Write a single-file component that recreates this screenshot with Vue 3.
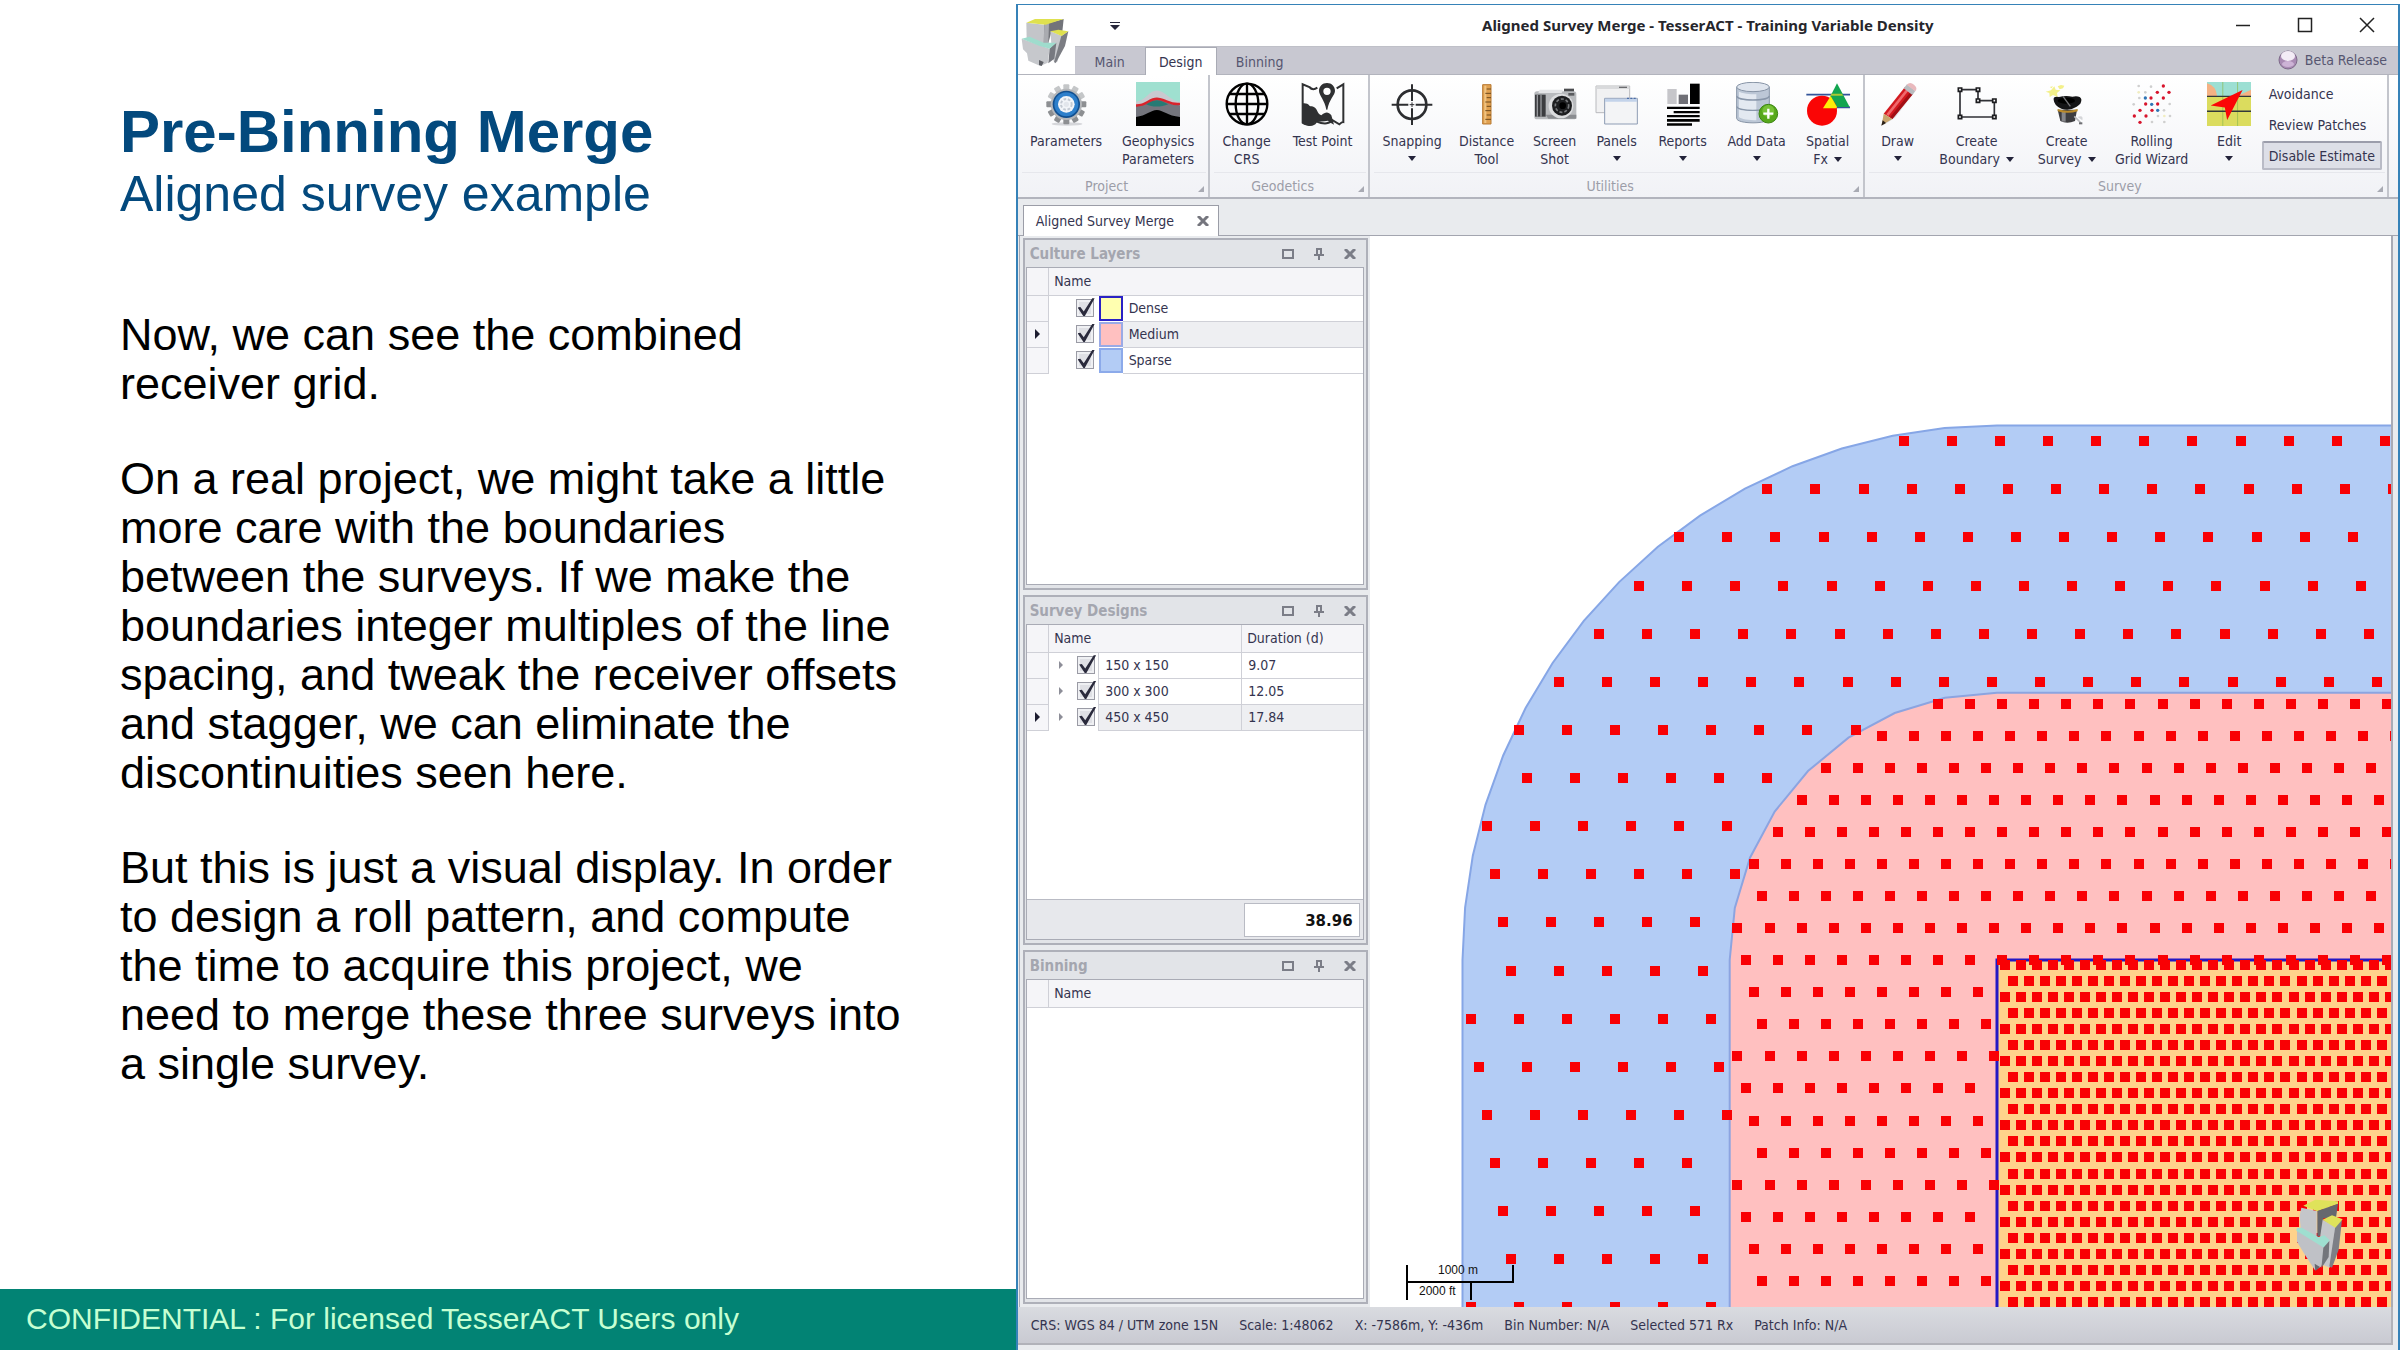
<script setup>
import { ref } from 'vue'

const paragraphs = [
  'Now, we can see the combined receiver grid.',
  'On a real project, we might take a little more care with the boundaries between the surveys. If we make the boundaries integer multiples of the line spacing, and tweak the receiver offsets and stagger, we can eliminate the discontinuities seen here.',
  'But this is just a visual display. In order to design a roll pattern, and compute the time to acquire this project, we need to merge these three surveys into a single survey.',
]

const tabs = [
  { label: 'Main', width: 70 },
  { label: 'Design', width: 72 },
  { label: 'Binning', width: 86 },
]
const activeTab = ref('Design')

const teeth = Array.from({ length: 12 }, (_, i) =>
  `<rect x="159" y="253" width="18" height="24" rx="3" transform="rotate(${i * 30} 168 313)" fill="${i > 2 && i < 10 ? '#8d8f92' : '#c4c6c8'}"/>`).join('')

const wizardDots = [
  [731, 260, 'r'], [713, 279, 'r'], [748, 279, 'r'], [694, 296, 'r'], [731, 296, 'r'], [678, 314, 'r'],
  [714, 314, 'r'], [661, 333, 'r'], [697, 333, 'r'], [644, 350, 'r'], [679, 350, 'r'], [661, 369, 'r'],
  [677, 296, 'b'], [696, 315, 'b'], [714, 333, 'b'],
  [657, 260, 'g'], [694, 262, 'g'], [677, 279, 'g'], [659, 296, 'g'], [642, 315, 'g'], [750, 314, 'g'],
  [733, 333, 'g'], [715, 350, 'g'], [751, 350, 'g'], [697, 368, 'g'], [734, 368, 'g'],
  [657, 279, 'y'], [734, 350, 'y'],
].map(([x, y, c]) => {
  const tone = { r: '#d8142c', b: '#2f74b5', g: '#cfcfcf', y: '#f1edc0' }[c]
  const r = c === 'r' || c === 'b' ? 5 : 4
  return `<circle cx="${x}" cy="${y}" r="${r}" fill="${tone}"/>`
}).join('')

const icons = {
  gear: {
    box: '101 246 132 132',
    art: `<ellipse cx="170" cy="372" rx="46" ry="5" fill="#d5d6da"/>${teeth}<circle cx="168" cy="313" r="47" fill="#b4b6b9"/><circle cx="168" cy="313" r="41" fill="#124f8f"/><circle cx="168" cy="313" r="36" fill="#2d7fcb"/><circle cx="168" cy="313" r="25" fill="#f2f5f9"/><circle cx="168" cy="313" r="16" fill="none" stroke="#c3cad3" stroke-width="6" stroke-dasharray="8 5"/><circle cx="168" cy="313" r="8" fill="#e2e6ec"/>`,
  },
  geophysics: {
    box: '378 247 131 131',
    art: `<path fill="#9fe0d0" d="M378 247h131v131H378z"/><path fill="#c9c9cf" d="M378 306c30-4 38-34 62-34s38 30 69 34v72H378z"/><path fill="#74757d" d="M378 318c30 0 38-19 62-19s34 16 69 17v62H378z"/><path fill="#267a74" d="M408 313c10-8 20-12 32-12s22 5 34 12c-22 9-48 9-66 0z"/><path fill="none" stroke="#d9232b" stroke-width="7" d="M378 317c32 1 38-20 62-20s40 20 69 15"/><path fill="#000" d="M378 351c30-4 44-21 62-21s32 17 69 21v27H378z"/>`,
  },
  globe: {
    box: '646 247 132 132',
    art: `<g fill="none" stroke="#000" stroke-width="7"><circle cx="712" cy="313" r="61"/><ellipse cx="712" cy="313" rx="34" ry="61"/><path d="M712 252v122M651 313h122M660 283h104M660 343h104"/></g>`,
  },
  testPoint: {
    box: '874 247 132 132',
    art: `<path fill="none" stroke="#2f3032" stroke-width="6" d="M923 264q-14 10-24-2l-20-8v115q18 8 28 6t12-10q20 8 32 6t16-10l22 13q8-8 12-7V254l-20 12"/><path fill="#2f3032" d="M877 311c24-3 18 10 30 9 18 3 14 24 28 27 12-10 20-12 30 0l8 28q-10-5-18-12-28 4-38 3-12 16-22 12-14-1-18-8z"/><path fill="#2f3032" fill-rule="evenodd" d="M952 250c14 0 24 10 24 24 0 12-18 26-23 56h-3c-5-28-22-44-22-56 0-14 10-24 24-24zm0 14a11 11 0 1 0 0 22 11 11 0 0 0 0-22z"/>`,
  },
  snapping: {
    box: '1145 247 132 132',
    art: `<g fill="none" stroke="#2c2d30"><circle cx="1211" cy="315" r="43" stroke-width="8"/><path stroke-width="6" d="M1211 254v50M1211 326v50M1150 315h50M1222 315h50"/><path stroke-width="3" d="M1204 315h14M1211 308v14"/></g>`,
  },
  ruler: {
    box: '1369 247 132 132',
    art: `<path fill="#e0a050" stroke="#b87a32" stroke-width="3" d="M1422 255h25v118h-25z"/><path fill="#f0c483" d="M1427 258h6v112h-6z"/><path stroke="#6f4a1c" stroke-width="3" d="M1434 268h13M1430 281h17M1434 294h13M1430 307h17M1434 320h13M1430 333h17M1434 346h13M1430 359h17"/>`,
  },
  camera: {
    box: '162 247 132 132',
    art: `<path fill="#4b4c4f" d="M255 267h30v12h-30z"/><rect x="166" y="275" width="126" height="84" rx="8" fill="#b8babd"/><path fill="#e4e5e7" d="M182 270h70l-4 10h-70z"/><path fill="#3b3c3f" d="M168 285h32v66h-32z"/><path fill="#97999d" d="M173 285h4v66h-4zM184 285h4v66h-4z"/><path fill="#8a8c90" d="M200 345h92v12h-84z"/><circle cx="246" cy="319" r="37" fill="#dcdddf"/><circle cx="249" cy="318" r="30" fill="#1d1e20"/><circle cx="249" cy="318" r="20" fill="none" stroke="#77797c" stroke-width="5" stroke-dasharray="9 6"/><circle cx="251" cy="318" r="10" fill="#000"/><path fill="#5a5b5e" d="M268 280h18v8h-18z"/>`,
  },
  panels: {
    box: '352 247 132 132',
    art: `<path fill="#f1f1f2" stroke="#b9babd" stroke-width="3" d="M355 259h101v80H355z"/><path fill="#d9dadc" d="M356 260h99v8h-99z"/><path stroke="#6c6d70" stroke-width="4" d="M424 263h24"/><path fill="#f3f4f6" stroke="#8d9cb4" stroke-width="3" d="M381 296h98v77h-98z"/><path fill="#c3d3ea" d="M382 297h96v9h-96z"/><path stroke="#4c6ea8" stroke-width="4" d="M448 296h26" stroke-dasharray="6 4"/>`,
  },
  reports: {
    box: '544 247 132 132',
    art: `<path fill="#c6c6ca" d="M563 268h28v45h-28z"/><path fill="#6f6f76" d="M597 285h28v28h-28z"/><path d="M631 252h29v61h-29z"/><path d="M562 321h98v7h-98zM582 334h78v7h-78zM562 346h98v7h-98zM562 358h98v8h-98zM562 371h75v7h-75z"/>`,
  },
  addData: {
    box: '764 247 132 132',
    art: `<path fill="#bcc7d6" stroke="#8794a6" stroke-width="3" d="M769 262v94c0 18 98 18 98 0v-94z"/><path fill="#e3e9f1" d="M776 276c20 8 42 8 52 8v78c-20 0-48-4-52-10z"/><path fill="none" stroke="#8997aa" stroke-width="4" d="M769 289c4 16 94 16 98 0M769 320c4 16 94 16 98 0"/><ellipse cx="818" cy="262" rx="49" ry="14" fill="#dfe5ee" stroke="#8794a6" stroke-width="3"/><circle cx="864" cy="342" r="28" fill="#57a81b" stroke="#3b8510" stroke-width="3"/><circle cx="864" cy="334" r="18" fill="#76c136"/><path stroke="#fff" stroke-width="7" d="M849 342h30M864 327v30"/>`,
  },
  spatial: {
    box: '977 247 132 132',
    art: `<path stroke="#33549a" stroke-width="5" d="M978 285h131M1030 323h79"/><path fill="#12a550" d="M1070 251l38 71h-74z"/><circle cx="1025" cy="333" r="45" fill="#fa0505"/><path fill="#fdee07" d="M1051 289l19 33q-1 4-3 4h-39z"/><path fill="#a9c834" d="M1053 282h32l3 6h-38z"/>`,
  },
  draw: {
    box: '1189 247 132 132',
    art: `<path fill="#c9c9ce" opacity=".6" d="M1212 376l76-84 18-16-60 78z"/><path fill="#d3191f" d="M1212 342l64-80 24 20-62 76z"/><path fill="#f0696c" d="M1220 344l62-78 6 5-62 78z"/><path fill="#a10f14" d="M1231 353l62-77 7 6-62 76z"/><path fill="#c8a56d" d="M1212 342l26 16-32 19z"/><path fill="#2a2018" d="M1209 362l-4 16 14-8z"/><path fill="#b9bbbf" d="M1272 266l10-12 25 20-9 12z"/><path fill="#e9b9bd" d="M1281 255q10-10 22 0t4 20z"/>`,
  },
  boundary: {
    box: '105 247 132 132',
    art: `<path fill="none" stroke="#303136" stroke-width="5" d="M120 270h54v33h49v49H120z"/><g fill="#fff" stroke="#1b1b1e" stroke-width="5"><path d="M115 265h10v10h-10zM169 265h10v10h-10zM169 298h10v10h-10zM218 298h10v10h-10zM218 347h10v10h-10zM115 347h10v10h-10z"/></g>`,
  },
  createSurvey: {
    box: '374 247 132 132',
    art: `<path fill="#f3f08a" d="M376 276l16-4 10-12 4 10 14 2-10 8 2 12-14-6-10 6-1-12zM412 260l10-4 10 2-4 8-10 3zM388 262l10-2-4 6z"/><path fill="#3d3d40" d="M412 330h58l-6 34q-24 10-44 0z"/><path fill="#85868a" d="M424 336h12v30h-12z"/><path fill="#bb8b2a" d="M412 328q30 10 60 0v7q-30 9-60 0z"/><path fill="#141416" d="M400 300q-2-12 16-8 20-6 40-1 24-4 27 8 2 14-14 22-22 14-46 6-22-10-23-27z"/><ellipse cx="438" cy="303" rx="26" ry="9" fill="#000"/><path stroke="#77787b" stroke-width="4" d="M428 290l22 30"/><path stroke="#b9babd" stroke-width="5" d="M462 350l20 20"/><path fill="#6f7074" d="M476 368h10v6h-10z"/><path fill="#d5d6d9" d="M472 352q18-8 14 10z"/>`,
  },
  rolling: { box: '631 248 132 132', art: wizardDots },
  edit: {
    box: '861 247 131 131',
    art: `<path fill="#dbdc5e" d="M861 247h131v131H861z"/><path fill="#9cdfd3" d="M861 247h131v42H861z"/><path fill="#f4b183" d="M861 251q28 8 30 38h-30zM992 270v19h-40z"/><path stroke="#8db84e" stroke-width="2" d="M908 247v131M952 247v131"/><path stroke="#32383a" stroke-width="4" d="M861 290h131M861 334h131"/><path fill="#fb0606" d="M967 271l-46 89-7-37-42-6z"/>`,
  },
}

const groups = [
  {
    title: 'Project',
    items: [
      { icon: 'gear', lines: ['Parameters'], width: 89 },
      { icon: 'geophysics', lines: ['Geophysics', 'Parameters'], width: 95 },
    ],
  },
  {
    title: 'Geodetics',
    items: [
      { icon: 'globe', lines: ['Change', 'CRS'], width: 66 },
      { icon: 'testPoint', lines: ['Test Point'], width: 86 },
    ],
  },
  {
    title: 'Utilities',
    items: [
      { icon: 'snapping', lines: ['Snapping', ''], menu: true, width: 77 },
      { icon: 'ruler', lines: ['Distance', 'Tool'], width: 72 },
      { icon: 'camera', lines: ['Screen', 'Shot'], width: 64 },
      { icon: 'panels', lines: ['Panels', ''], menu: true, width: 60 },
      { icon: 'reports', lines: ['Reports', ''], menu: true, width: 72 },
      { icon: 'addData', lines: ['Add Data', ''], menu: true, width: 76 },
      { icon: 'spatial', lines: ['Spatial', 'Fx'], menu: true, width: 66 },
    ],
  },
  {
    title: 'Survey',
    items: [
      { icon: 'draw', lines: ['Draw', ''], menu: true, width: 58 },
      { icon: 'boundary', lines: ['Create', 'Boundary'], menu: true, width: 100 },
      { icon: 'createSurvey', lines: ['Create', 'Survey'], menu: true, width: 80 },
      { icon: 'rolling', lines: ['Rolling', 'Grid Wizard'], width: 90 },
      { icon: 'edit', lines: ['Edit', ''], menu: true, width: 65 },
    ],
    side: ['Avoidance', 'Review Patches', 'Disable Estimate'],
  },
]

const panels = [
  { name: 'Culture Layers', share: 352 },
  { name: 'Survey Designs', share: 350 },
  { name: 'Binning', share: 354 },
]
const layers = ref([
  { id: 'dense', name: 'Dense', fill: '#ffffb0', line: '#2a22c4', on: true },
  { id: 'medium', name: 'Medium', fill: '#ffc0c0', line: '#9aaae6', on: true, current: true },
  { id: 'sparse', name: 'Sparse', fill: '#b3ccf5', line: '#8caaea', on: true },
])
const designs = ref([
  { id: 'd150', name: '150 x 150', days: '9.07', on: true },
  { id: 'd300', name: '300 x 300', days: '12.05', on: true },
  { id: 'd450', name: '450 x 450', days: '17.84', on: true, current: true },
])

const status = ['CRS: WGS 84 / UTM zone 15N', 'Scale: 1:48062', 'X: -7586m, Y: -436m', 'Bin Number: N/A', 'Selected 571 Rx', 'Patch Info: N/A']

/* Survey geometry, in map pixels from the map's top left corner */
const cx = 627
const cy = 724
const FAR = 4000
function roundedCorner(radius, segments) {
  const pts = [[cx - radius, FAR]]
  for (let i = 0; i <= segments; i++) {
    const a = (Math.PI / 2) * (i / segments)
    pts.push([cx - radius * Math.cos(a), cy - radius * Math.sin(a)])
  }
  pts.push([FAR, cy - radius], [FAR, FAR])
  return pts
}
const outer = roundedCorner(534.5, 16)
const inner = roundedCorner(267.3, 8)
const toPoints = (pts) => pts.map((p) => p.map((n) => n.toFixed(1)).join(',')).join(' ')

function inside([x, y], pts) {
  let hit = false
  for (let i = 0, j = pts.length - 1; i < pts.length; j = i++) {
    const [xi, yi] = pts[i]
    const [xj, yj] = pts[j]
    if (yi > y !== yj > y && x < ((xj - xi) * (y - yi)) / (yj - yi) + xi) hit = !hit
  }
  return hit
}
const WIDTH = 1060
const HEIGHT = 1080
function receivers(x0, y0, pitch, phases, keep) {
  let d = ''
  for (let row = 0; y0 + row * pitch < HEIGHT; row++) {
    const y = y0 + row * pitch
    let x = (x0 + (row % phases) * (pitch / phases)) % pitch
    for (; x < WIDTH; x += pitch) {
      if (keep([x, y])) d += `M${Math.round(x - 5)} ${Math.round(y - 5)}h10v10h-10z`
    }
  }
  return d
}
const sparseDots = receivers(533.7, 205.2, 48.12, 6, (p) => p[0] > 95 && inside(p, outer) && !inside(p, inner))
const mediumDots = receivers(568, 467.5, 32.08, 4, (p) => inside(p, inner) && !(p[0] > cx && p[1] > cy + 2))
const denseDots = receivers(634.8, 729, 16.04, 2, (p) => p[0] > cx + 2)
</script>

<template>
  <div class="page">
    <section class="slide">
      <div class="slide-body">
        <h1>Pre-Binning Merge</h1>
        <h2>Aligned survey example</h2>
        <div class="copy">
          <p v-for="p in paragraphs" :key="p">{{ p }}</p>
        </div>
      </div>
      <footer class="confidential">CONFIDENTIAL : For licensed TesserACT Users only</footer>
    </section>

    <section class="app">
      <header class="head">
        <div class="titlebar">
          <div class="quick">
            <button aria-label="Customize quick access">
              <svg width="10" height="8" viewBox="0 0 10 8"><path d="M0 0h10v1H0zM0 3h10L5 8z" fill="#26263a" /></svg>
            </button>
          </div>
          <div class="title">Aligned Survey Merge - TesserACT - Training Variable Density</div>
          <div class="controls">
            <button aria-label="Minimize"><svg width="16" height="16"><path d="M1 8.5h14" stroke="#222" stroke-width="1.5" /></svg></button>
            <button aria-label="Maximize"><svg width="16" height="16"><path d="M1.5 1.5h13v13h-13z" fill="none" stroke="#222" stroke-width="1.5" /></svg></button>
            <button aria-label="Close"><svg width="16" height="16"><path d="M1 1l14 14M15 1L1 15" stroke="#222" stroke-width="1.5" /></svg></button>
          </div>
        </div>
        <div class="logo">
          <svg width="50" height="50" viewBox="15 24 150 150">
            <path fill="#c3c5c9" d="M34 38l54 6-2 56-51-12z" />
            <path fill="#72747a" d="M88 43l58-16-4 38-32-2-10 36H86z" />
            <path fill="#a9abb0" d="M88 43l14-4-2 60H86z" />
            <path fill="#dfe14f" d="M34 38l26-11h86l-54 17z" />
            <path fill="#c6c8cc" d="M106 64l36 14-14 76-10 6-6-22z" />
            <path fill="#7b7d83" d="M139 78l21-14-10 44-28 52-4-6z" />
            <path fill="#dfe14f" d="M106 64l24-5 30 5-20 14z" />
            <path fill="#c6c8cc" d="M20 86l84 30-6 42-22 10-36-16-4-22-12-12z" />
            <path fill="#777980" d="M104 115l20-17-6 48-18 14z" />
            <path fill="#9fdccd" d="M20 86l24-6 42 18h38l-20 18-30-8z" />
            <path fill="#5e6066" d="M72 150l14 6-6 12-8-3z" />
          </svg>
        </div>
        <nav class="tabs">
          <button
            v-for="t in tabs"
            :key="t.label"
            class="tab"
            :class="{ active: activeTab === t.label }"
            :style="{ width: t.width + 'px' }"
            @click="activeTab = t.label"
          >{{ t.label }}</button>
          <a class="beta" href="#">
            <svg width="20" height="20" viewBox="0 0 20 20">
              <circle cx="10" cy="10" r="9" fill="#a98bb4" stroke="#7e6a8a" />
              <ellipse cx="10" cy="6" rx="7" ry="5" fill="#f3ecf6" />
              <ellipse cx="10" cy="14" rx="6" ry="3" fill="#cdb3d6" />
            </svg>
            <span>Beta Release</span>
          </a>
        </nav>
      </header>

      <div class="ribbon">
        <div v-for="g in groups" :key="g.title" class="group">
          <div class="items">
            <button v-for="it in g.items" :key="it.icon" class="item" :style="{ width: it.width + 'px' }">
              <svg class="icon" width="44" height="44" :viewBox="icons[it.icon].box" v-html="icons[it.icon].art"></svg>
              <span v-for="(line, n) in it.lines" :key="n" class="line">
                {{ line }}<i v-if="it.menu && n === it.lines.length - 1" class="caret" :class="{ alone: !line }"></i>
              </span>
            </button>
            <div v-if="g.side" class="side">
              <button v-for="s in g.side" :key="s" class="side-btn" :class="{ pressed: s === 'Disable Estimate' }">{{ s }}</button>
            </div>
          </div>
          <div class="group-title">{{ g.title }}<i class="launcher"></i></div>
        </div>
      </div>

      <div class="docbar">
        <div class="doctab">
          <span>Aligned Survey Merge</span>
          <button aria-label="Close document"><svg width="12" height="10" viewBox="0 0 12 10"><path d="M1 0l10 10M11 0L1 10" stroke="#75767e" stroke-width="3" /></svg></button>
        </div>
      </div>

      <div class="workspace">
        <aside class="dock">
          <section v-for="{ name, share } in panels" :key="name" class="panel" :style="{ flexGrow: share }">
            <div class="panel-head">
              <h3>{{ name }}</h3>
              <button aria-label="Maximize panel"><svg width="12" height="10"><path d="M1 1h10v8H1z" fill="none" stroke="#7b7d87" stroke-width="2" /></svg></button>
              <button aria-label="Pin panel"><svg width="12" height="12"><path d="M3 1h6M4 1v6M8 1v6M1 7h10M6 8v4" fill="none" stroke="#7b7d87" stroke-width="2" /></svg></button>
              <button aria-label="Close panel"><svg width="12" height="10"><path d="M1 0l10 10M11 0L1 10" stroke="#7b7d87" stroke-width="3" /></svg></button>
            </div>
            <div class="panel-body">
              <table v-if="name === 'Culture Layers'">
                <colgroup><col class="c-mark" /><col class="c-check" /><col class="c-swatch" /><col /></colgroup>
                <thead><tr><th></th><th colspan="3">Name</th></tr></thead>
                <tbody>
                  <tr v-for="l in layers" :key="l.id" :class="{ current: l.current }">
                    <td class="mark"><i v-if="l.current" class="pointer"></i></td>
                    <td class="tick"><input :id="l.id" v-model="l.on" type="checkbox" /></td>
                    <td class="swatch"><i :style="{ background: l.fill, borderColor: l.line }"></i></td>
                    <td class="cell"><label :for="l.id">{{ l.name }}</label></td>
                  </tr>
                </tbody>
              </table>
              <table v-else-if="name === 'Survey Designs'">
                <colgroup><col class="c-mark" /><col class="c-check" /><col /><col class="c-days" /></colgroup>
                <thead><tr><th></th><th colspan="2">Name</th><th>Duration (d)</th></tr></thead>
                <tbody>
                  <tr v-for="d in designs" :key="d.id" :class="{ current: d.current }">
                    <td class="mark"><i v-if="d.current" class="pointer"></i></td>
                    <td class="tick"><i class="expander"></i><input :id="d.id" v-model="d.on" type="checkbox" /></td>
                    <td class="cell split"><label :for="d.id">{{ d.name }}</label></td>
                    <td class="cell split">{{ d.days }}</td>
                  </tr>
                </tbody>
              </table>
              <table v-else>
                <colgroup><col class="c-mark" /><col /></colgroup>
                <thead><tr><th></th><th>Name</th></tr></thead>
              </table>
              <div v-if="name === 'Survey Designs'" class="total"><output>38.96</output></div>
            </div>
          </section>
        </aside>

        <div class="map">
          <svg class="canvas" role="img" aria-label="Combined receiver grid">
            <polygon :points="toPoints(outer)" fill="#b3ccf5" stroke="#86a6e6" stroke-width="2" />
            <polygon :points="toPoints(inner)" fill="#ffc0c0" stroke="#8ca4e0" stroke-width="2" />
            <rect :x="cx" :y="cy" :width="FAR" :height="FAR" fill="#ffd28b" stroke="#2418c4" stroke-width="3" />
            <path :d="denseDots + mediumDots + sparseDots" fill="#f90004" />
            <g fill="none" stroke="#000" stroke-width="2">
              <path d="M37 1029v35M37 1046h106v-17M101 1046v18" />
            </g>
            <text x="68" y="1038">1000 m</text>
            <text x="49" y="1059">2000 ft</text>
          </svg>
          <svg class="watermark" width="47" height="73" viewBox="1070 898 141 219">
            <path fill="#c4c6ca" d="M1086 924l46 10v84l-48-30-3-40z" />
            <path fill="#dfe25a" d="M1092 918l36-18 68 5v8l-62 22z" />
            <path fill="#66686e" d="M1134 934l62-22-6 42-38 2-6 50-12 6z" />
            <path fill="#c4c6ca" d="M1150 960l40 20-18 124-26-10-4-80z" />
            <path fill="#7d7f86" d="M1188 980l20-20-10 90-20 54-8-4z" />
            <path fill="#dfe25a" d="M1150 960l28-13 32 12-22 25z" />
            <path fill="#bfc1c6" d="M1073 988l80 52-6 60-20 12-30-46-24-40z" />
            <path fill="#9fdfd0" d="M1073 984l14 0 50 28 18-5 16 14-16 24-84-52z" />
            <path fill="#73757b" d="M1152 1044l18-20-2 48-22 34z" />
            <path fill="#66686e" d="M1126 1092l16 10-14 12z" />
          </svg>
        </div>
      </div>

      <footer class="status"><span v-for="s in status" :key="s">{{ s }}</span></footer>
    </section>
  </div>
</template>

<style>
body { margin: 0; background: #fff; }
</style>

<style scoped>
* { box-sizing: border-box; }
button { border: 0; padding: 0; margin: 0; background: none; font: inherit; color: inherit; }
.page { display: grid; grid-template-columns: 1016fr 1384fr; min-height: 100vh; }

.slide { display: flex; flex-direction: column; font-family: "Liberation Sans", Arial, sans-serif; }
.slide-body { flex: 1; padding: 98px 0 0 120px; }
h1, h2, h3, p { margin: 0; }
h1 { font-size: 60px; line-height: 68px; color: #03497d; }
h2 { font-size: 50px; line-height: 56px; font-weight: 400; color: #03497d; }
.copy { margin-top: 88px; width: 784px; display: flex; flex-direction: column; gap: 46px; font-size: 45px; line-height: 49px; color: #000; }
.confidential { height: 61px; padding-left: 26px; background: #028374; color: #c6ffd2; font-size: 30px; line-height: 60px; }

.app {
  display: flex; flex-direction: column; margin-top: 4px; padding-bottom: 5px;
  border: 2px solid #3682b8; border-width: 1px 2px 0; background: #e9ebee;
  font-family: "DejaVu Sans Condensed", "Noto Sans", sans-serif; font-size: 14px; line-height: 18px; color: #34344f;
}
.head { display: grid; grid-template-columns: 57px 1fr; grid-template-rows: 41px 29px; background: #fff; }
.titlebar { grid-row: 1; grid-column: 1 / -1; display: grid; grid-template-columns: 1fr auto 1fr; align-items: center; padding-bottom: 2px; }
.quick { padding-left: 92px; }
.title { font-family: "Noto Sans", sans-serif; font-weight: 700; font-size: 15px; color: #26262c; }
.controls { display: flex; justify-content: flex-end; }
.controls button { width: 62px; height: 39px; display: grid; place-items: center; }
.logo { grid-row: 1 / 3; grid-column: 1; padding: 13px 0 0 2px; border-bottom: 1px solid #b2b4bd; }
.tabs { grid-row: 2; grid-column: 2; display: flex; background: #c8c8d1; border-top: 1px solid #bfc0c8; border-bottom: 1px solid #b2b4bd; }
.tab { height: 28px; padding-top: 1px; color: #565670; }
.tab.active { background: #fff; border: 1px solid #a9abb5; border-bottom: 0; height: 29px; padding: 0; color: #34344f; }
.beta { margin-left: auto; display: flex; align-items: center; gap: 7px; padding: 0 11px 2px 0; color: #565670; text-decoration: none; }

.ribbon { display: flex; height: 124px; background: linear-gradient(#fff, #f1f2f6); border-bottom: 2px solid #b2b4bd; }
.group { display: flex; flex-direction: column; padding: 0 2px 0 4px; border-right: 2px solid #c3c5cc; }
.group:last-child { margin-right: 9px; flex: 1; }
.items { flex: 1; display: flex; }
.item { display: flex; flex-direction: column; align-items: center; padding-top: 7px; }
.icon { display: block; margin-bottom: 6px; }
.line { display: flex; align-items: center; min-height: 18px; white-space: nowrap; }
.caret { margin-left: 6px; border: 4px solid transparent; border-top: 5px solid #23233a; border-bottom: 0; }
.caret.alone { margin: 0 0 2px; }
.side { display: flex; flex-direction: column; flex: 1; gap: 2px; padding: 4px 3px 0 0; }
.side-btn { height: 29px; padding: 0 6px; border: 1px solid transparent; text-align: left; white-space: nowrap; }
.side-btn.pressed { background: #dddfe7; border: 2px solid #b9bbc6; border-top-color: #9b9dab; border-radius: 2px; padding: 0 5px; }
.group-title { position: relative; height: 25px; padding-right: 14px; border-top: 1px solid #e6e7ec; text-align: center; line-height: 26px; color: #9c9da8; }
.launcher { position: absolute; right: 2px; bottom: 5px; border: 3px solid #a8aab3; border-top-color: transparent; border-left-color: transparent; }

.docbar { height: 37px; padding: 6px 0 0 5px; border-bottom: 1px solid #a3a5af; }
.doctab { width: 196px; height: 31px; display: flex; align-items: center; justify-content: space-between; padding: 0 9px 0 12px; background: #fff; border: 1px solid #9b9da7; border-bottom: 0; }
.doctab button, .panel-head button { display: grid; place-items: center; }

.workspace { flex: 1; display: flex; margin: 0 5px 0 1px; border: 1px solid #a9abb5; border-width: 0 2px 0 1px; }
.dock { flex: 0 0 350px; display: flex; flex-direction: column; gap: 5px; padding: 2px 2px 3px 3px; }
.panel { flex: 1 1 0; display: flex; flex-direction: column; padding: 0 2px 3px 1px; border: 2px solid #aeb0b9; background: #e2e4e8; }
.panel-head { display: flex; align-items: center; gap: 19px; height: 27px; padding: 0 8px 0 4px; }
.panel-head h3 { flex: 1; font-size: 15px; font-weight: 700; color: #a4a6af; }
.panel-body { flex: 1; display: flex; flex-direction: column; background: #fff; border: 1px solid #a9abb5; }
table { width: 100%; border-collapse: collapse; table-layout: fixed; }
.c-mark { width: 22px; }
.c-check { width: 50px; }
.c-swatch { width: 24px; }
.c-days { width: 121px; }
th { height: 27px; padding: 0 5px; text-align: left; font-weight: 400; background: #f5f5f8; border: 1px solid #cfd0d7; border-width: 0 0 1px 1px; }
th:first-child { border-left: 0; }
td { height: 26px; padding: 0; }
.mark { background: #f6f6f9; border: 1px solid #cfd0d7; border-width: 0 1px 1px 0; text-align: center; line-height: 10px; }
.pointer, .expander { display: inline-block; border: 5px solid transparent; border-left: 5px solid #1d1d30; border-right: 0; }
.expander { border-width: 4px; border-left: 4px solid #8d8e98; border-right: 0; margin: 0 14px 0 10px; }
.tick { text-align: right; white-space: nowrap; line-height: 0; padding-right: 5px; background: #fff; }
.tick > * { vertical-align: middle; }
.swatch i { display: block; width: 24px; height: 25px; border: 2px solid; }
.cell { padding: 0 6px; border-bottom: 1px solid #cfd0d7; }
.split { border-left: 1px solid #cfd0d7; }
.current .cell { background: #eeeff2; }
input[type="checkbox"] { appearance: none; position: relative; width: 18px; height: 18px; margin: 0; border: 1px solid #9a9ba5; background: #dfe0e5; box-shadow: inset 0 0 0 2px #eff0f3; }
input[type="checkbox"]:checked::before {
  content: ""; position: absolute; left: 1px; top: -2px; width: 17px; height: 18px; background: #2a2a3c;
  clip-path: polygon(0 52%, 16% 48%, 36% 74%, 86% 0, 100% 0, 42% 100%, 34% 100%);
}
.total { margin-top: auto; height: 40px; padding: 3px; display: flex; justify-content: flex-end; background: #e7e8ec; border-top: 1px solid #b9bbc4; }
output { width: 116px; height: 34px; padding: 2px 6px 0; background: #fff; border: 1px solid #b9bbc4; text-align: right; font: 700 15px/31px "DejaVu Sans", sans-serif; color: #111; }

.map { flex: 1; position: relative; overflow: hidden; background: #fff; }
.canvas { position: absolute; inset: 0; width: 100%; height: 100%; }
.canvas text { font: 12px "Liberation Sans", Arial, sans-serif; fill: #111; }
.watermark { position: absolute; right: 48px; bottom: 35px; }

.status { display: flex; align-items: center; gap: 21px; height: 38px; margin-right: 5px; padding-left: 13px; background: linear-gradient(#d9dbe0, #c9cad2); border: 2px solid #b1b2b9; border-width: 0 2px 2px 0; white-space: nowrap; }
</style>
